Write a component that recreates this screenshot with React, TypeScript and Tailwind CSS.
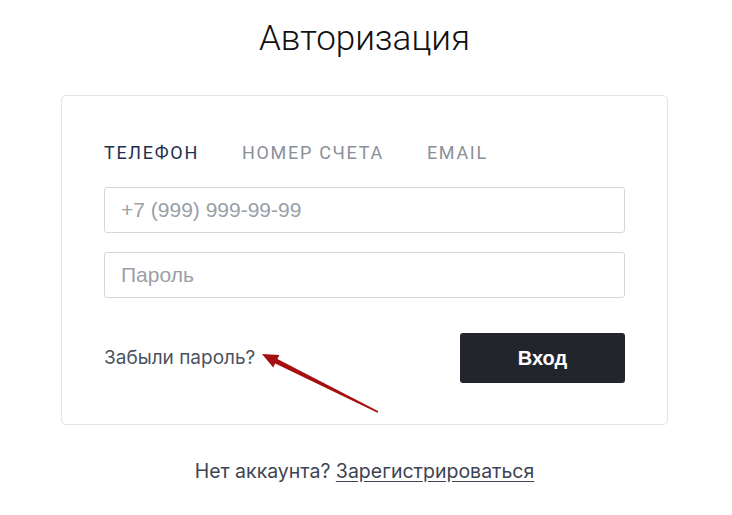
const tabs = [
  { label: "Телефон", active: true },
  { label: "Номер счета", active: false },
  { label: "Email", active: false },
]

function PointerArrow(): React.JSX.Element {
  return (
    <svg
      aria-hidden="true"
      className="pointer-events-none absolute top-[250px] left-[195px] h-[70px] w-[130px]"
      viewBox="0 0 130 70"
    >
      <polygon
        fill="#a60f0f"
        points="5,8 22.4,8.9 20.4,13 121.4,65.3 120.6,66.7 18.2,17.4 16.2,21.5"
      />
    </svg>
  )
}

export default function App(): React.JSX.Element {
  return (
    <div className="min-h-[515px] w-full bg-white pt-[18px] font-['Inter',sans-serif]">
      <div className="ml-[61px] flex w-[607px] flex-col items-center">
        <h1 className="font-['Roboto',sans-serif] font-light text-[35px] text-[#111] leading-[42px]">
          Авторизация
        </h1>

        <div className="relative mt-[35px] w-full rounded-[5px] border border-[#e2e4e8] bg-white px-[42px] pt-[45px] pb-[41px]">
          <div className="flex gap-[43px]">
            {tabs.map((tab) => (
              <button
                key={tab.label}
                type="button"
                className={
                  tab.active
                    ? "font-['Roboto',sans-serif] text-[#1f2f4f] text-[18px] uppercase leading-6 tracking-[1.7px]"
                    : "font-['Roboto',sans-serif] text-[#8a9099] text-[18px] uppercase leading-6 tracking-[1.7px]"
                }
              >
                {tab.label}
              </button>
            ))}
          </div>

          <div className="mt-[22px] flex flex-col gap-[19px]">
            <input
              className="h-[46px] w-full rounded-[3px] border border-[#d5d7da] px-4 font-['Liberation_Sans',sans-serif] text-[21px] outline-none placeholder:text-[#9aa0a8]"
              placeholder="+7 (999) 999-99-99"
            />
            <input
              type="password"
              className="h-[46px] w-full rounded-[3px] border border-[#d5d7da] px-4 font-['Liberation_Sans',sans-serif] text-[21px] outline-none placeholder:text-[#9aa0a8]"
              placeholder="Пароль"
            />
          </div>

          <div className="mt-[35px] flex items-center justify-between">
            <a className="text-[#4b5262] text-[19px]" href="#">
              Забыли пароль?
            </a>
            <button
              type="button"
              className="h-[50px] w-[165px] rounded-[3px] bg-[#23252d] font-['Liberation_Sans',sans-serif] font-bold text-[20px] text-white"
            >
              Вход
            </button>
          </div>

          <PointerArrow />
        </div>

        <p className="mt-[34px] text-[#3d4452] text-[19.5px] leading-6">
          Нет аккаунта?{" "}
          <a className="underline underline-offset-[3px]" href="#">
            Зарегистрироваться
          </a>
        </p>
      </div>
    </div>
  )
}
